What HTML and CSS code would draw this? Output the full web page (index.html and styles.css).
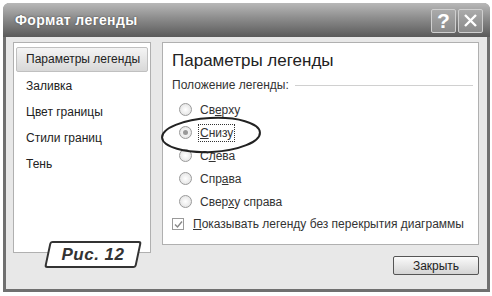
FILE: index.html
```html
<!DOCTYPE html>
<html lang="ru">
<head>
 <meta charset="UTF-8">
 <title>Формат легенды</title>
 <link rel="stylesheet" href="styles.css">
</head>
<body>
 <div class="window">
   <div class="titlebar">
     <span class="title">Формат легенды</span>
     <div class="title-btns">
       <span class="tbtn">?</span>
       <span class="tbtn">
         <svg width="15" height="15" viewBox="0 0 15 15"><path d="M2 2 L13 13 M13 2 L2 13" stroke="#fff" stroke-width="2.4"/></svg>
       </span>
     </div>
   </div>

   <div class="content">
     <ul class="nav">
       <li class="active">Параметры легенды</li>
       <li>Заливка</li>
       <li>Цвет границы</li>
       <li>Стили границ</li>
       <li>Тень</li>
     </ul>

     <div class="right">
       <div class="pane">
         <h2>Параметры легенды</h2>
         <div class="group-title"><span>Положение легенды:</span></div>
         <ul class="radios">
           <li><span class="radio"></span><span>Св<u>е</u>рху</span></li>
           <li><span class="radio checked"></span><span class="focus"><u>С</u>низу</span></li>
           <li><span class="radio"></span><span>С<u>л</u>ева</span></li>
           <li><span class="radio"></span><span>Спр<u>а</u>ва</span></li>
           <li><span class="radio"></span><span>Свер<u>х</u>у справа</span></li>
         </ul>
         <div class="check">
           <span class="box">
             <svg width="9" height="9" viewBox="0 0 9 9"><path d="M1 4.5 L3.5 7 L8 1.5" fill="none" stroke="#888" stroke-width="1.4"/></svg>
           </span>
           <span><u>П</u>оказывать легенду без перекрытия диаграммы</span>
         </div>
         <!-- обводка вокруг "Снизу" -->
         <svg class="mark" width="104" height="42" viewBox="0 0 104 42">
           <ellipse cx="52" cy="21" rx="49" ry="17" fill="none" stroke="#222" stroke-width="2" transform="rotate(-3 52 21)"/>
         </svg>
       </div>
       <div class="footer">
         <button class="btn">Закрыть</button>
       </div>
     </div>
   </div>

   <div class="caption">Рис. 12</div>
 </div>
</body>
</html>
```

FILE: styles.css
```css
* { box-sizing: border-box; }
body { margin: 0; background: #fff; font-family: "Liberation Sans", Arial, sans-serif; }
.window { position: relative; margin: 3px 2px 0 3px; width: 487px; height: 289px; border: 3px solid #707070; border-top: none; border-radius: 7px 7px 0 0; background: #e8e8e8; }
.titlebar { height: 34px; display: flex; align-items: center; justify-content: space-between; margin: 0 -3px; padding: 0 4px 0 12px; background: linear-gradient(#b8b8b8, #8c8c8c 45%, #5a5a5a); border-radius: 6px 6px 0 0; }
.title { color: #fff; font-weight: bold; font-size: 14px; letter-spacing: 0.4px; text-shadow: 0 0 2px #444; }
.title-btns { display: flex; gap: 2px; margin-right: 3px; margin-top: 1px; }
.tbtn { width: 25px; height: 24px; display: flex; align-items: center; justify-content: center; border: 1px solid #cfcfcf; border-radius: 2px; background: linear-gradient(#aaa, #8a8a8a); color: #fff; font-weight: bold; font-size: 21px; }

.content { display: grid; grid-template-columns: 138px 317px; column-gap: 11px; padding: 5px 0 0 7px; }
.nav { list-style: none; margin: 0; padding: 4px 2px; height: 211px; background: #fff; border: 1px solid #b0b0b0; font-size: 12px; color: #222; }
.nav li { height: 26px; line-height: 26px; padding-left: 10px; }
.nav li.active { height: 25px; line-height: 23px; margin-bottom: 1px; border: 1px solid #c0c0c0; border-radius: 2px; background: linear-gradient(#f4f4f4, #d8d8d8); padding-left: 9px; }

.right { display: flex; flex-direction: column; }
.pane { position: relative; height: 203px; background: #fff; border: 1px solid #b0b0b0; padding: 0 5px 0 9px; color: #333; font-size: 12px; }
.pane h2 { margin: 8px 0 0; font-weight: normal; font-size: 17px; color: #222; }
.group-title { display: flex; align-items: center; gap: 6px; margin-top: 7px; color: #333; }
.group-title::after { content: ""; flex: 1; border-top: 1px solid #d0d0d0; }
.radios { list-style: none; margin: 6px 0 0; padding: 0 0 0 7px; }
.radios li { display: flex; align-items: center; gap: 8px; height: 23px; }
.radio { width: 13px; height: 13px; border-radius: 50%; border: 1px solid #9a9a9a; background: radial-gradient(#fff, #ddd); position: relative; }
.radio.checked::after { content: ""; position: absolute; left: 3px; top: 3px; width: 5px; height: 5px; border-radius: 50%; background: #999; }
.focus { outline: 1px dotted #333; outline-offset: 1px; }
.check { display: flex; align-items: center; gap: 9px; margin-top: 4px; }
.box { width: 12px; height: 12px; border: 1px solid #9a9a9a; display: flex; align-items: center; justify-content: center; }
.mark { position: absolute; left: -4px; top: 71px; }

.footer { display: flex; justify-content: flex-end; padding: 11px 0 0; }
.btn { width: 86px; height: 19px; font-family: "Liberation Sans", Arial, sans-serif; font-size: 12px; color: #222; border: 1px solid #555; border-radius: 2px; background: linear-gradient(#fafafa, #d4d4d4); padding: 0; }

.caption { position: absolute; left: 41px; top: 238px; width: 92px; height: 27px; line-height: 27px; text-align: center; font-weight: bold; font-style: italic; font-size: 17px; letter-spacing: 0.5px; color: #333; isolation: isolate; }
.caption::before { content: ""; position: absolute; inset: 0; z-index: -1; transform: skewX(-12deg); background: #fff; border: 2px solid #333; border-radius: 3px; }
```
